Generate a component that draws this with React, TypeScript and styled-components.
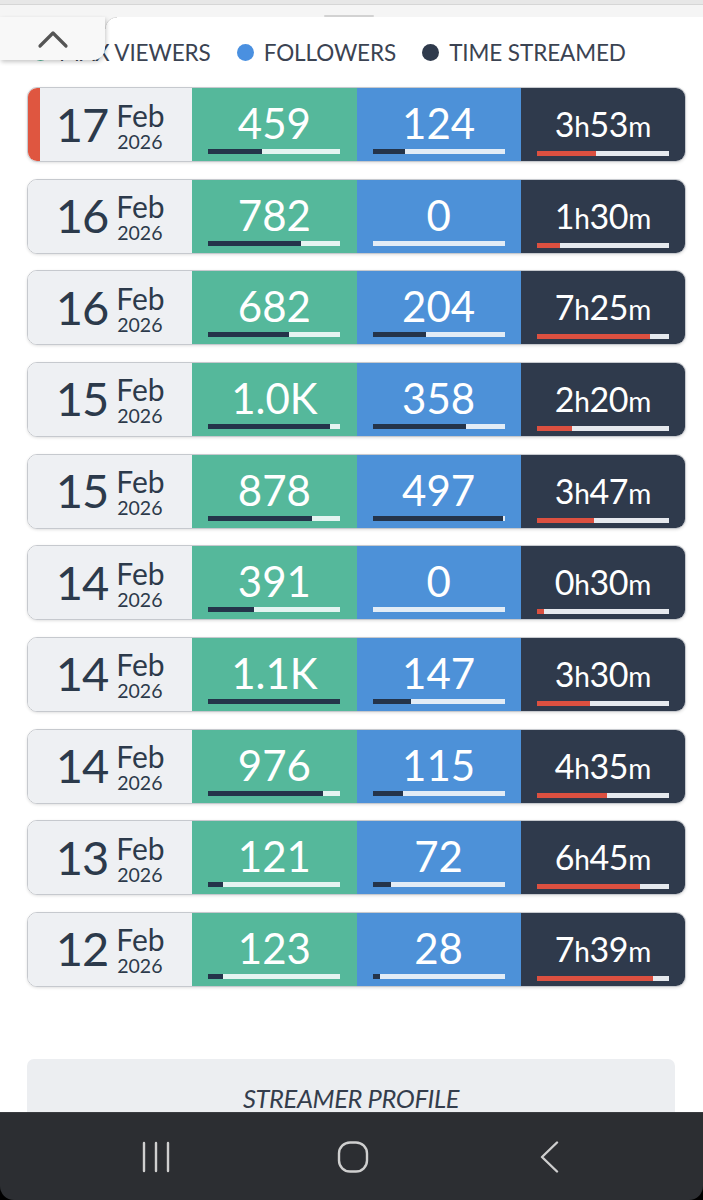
import React from "react";
import styled, { createGlobalStyle } from "styled-components";

const Global = createGlobalStyle`
  html, body { margin: 0; padding: 0; background: #ffffff; }
  body { font-family: Lato, "Open Sans", sans-serif; color: #2c3a4b; }
  * { box-sizing: border-box; }
`;

const Page = styled.div`
  position: relative;
  width: 703px;
  min-height: 1200px;
  background: #ffffff;
`;

const TopStrip = styled.div`
  height: 17px;
  background: #f5f5f5;
  border-top: 4px solid #e7e7e7;
  box-shadow: inset 0 1px 0 #d6d6d6;
  display: flex;
  justify-content: center;
  align-items: flex-end;
`;

const Handle = styled.div`
  width: 50px;
  height: 2px;
  margin-left: -5px;
  background: #d2d2d2;
  border-radius: 1px;
`;

const Tab = styled.div`
  position: absolute;
  left: 0;
  top: 17px;
  width: 105px;
  height: 43px;
  background: #f8f8f8;
  border-bottom-right-radius: 12px;
  box-shadow: 1px 2px 4px rgba(0, 0, 0, 0.22);
  display: flex;
  align-items: center;
  justify-content: center;
  z-index: 2;
`;

const Legend = styled.div`
  position: relative;
  height: 70px;
  display: flex;
  align-items: center;
  padding-left: 32px;
  gap: 26px;
  &::before {
    content: "";
    position: absolute;
    left: 105px;
    top: 0;
    width: 12px;
    height: 12px;
    background: radial-gradient(circle at 100% 100%, transparent 11px, #dcdcdc 11.5px, #f5f5f5 12.5px);
  }
`;

const LegendItem = styled.div`
  display: flex;
  align-items: center;
  gap: 10px;
  font-size: 22.5px;
  color: #3b4352;
  letter-spacing: -0.1px;
`;

const Dot = styled.span<{ $c: string }>`
  width: 17px;
  height: 17px;
  border-radius: 50%;
  background: ${(p) => p.$c};
  display: inline-block;
`;

const List = styled.div`
  display: flex;
  flex-direction: column;
  gap: 16.67px;
  padding: 0 17px 0 27px;
`;

const Row = styled.div`
  height: 75px;
  display: grid;
  grid-template-columns: repeat(4, 1fr);
  border: 1px solid #c6c9ce;
  border-radius: 10px;
  overflow: hidden;
  box-shadow: 0 1px 3px rgba(0, 0, 0, 0.12);
`;

const DateCell = styled.div<{ $hl?: boolean }>`
  background: #eef0f3;
  box-shadow: ${(p) => (p.$hl ? "inset 12px 0 0 #df5640" : "none")};
  display: flex;
  justify-content: center;
  align-items: flex-start;
  padding-top: 12.5px;
  gap: 8px;
  color: #2c3a4b;
`;

const Day = styled.span`
  font-size: 47px;
  line-height: 46px;
  letter-spacing: -1px;
`;

const MonthCol = styled.div`
  display: flex;
  flex-direction: column;
  align-items: flex-start;
`;

const Month = styled.span`
  font-size: 30px;
  line-height: 29px;
`;

const Year = styled.span`
  font-size: 19.5px;
  line-height: 20px;
  margin-top: 2px;
  margin-left: 1px;
`;

const ValueCell = styled.div<{ $bg: string; $pt: number }>`
  background: ${(p) => p.$bg};
  display: flex;
  flex-direction: column;
  align-items: center;
  padding: ${(p) => p.$pt}px 16px 0;
  color: #ffffff;
`;

const Value = styled.span`
  font-size: 42px;
  line-height: 42px;
`;

const Time = styled.span`
  font-size: 34px;
  line-height: 34px;
  letter-spacing: -0.3px;
`;

const Unit = styled.span`
  font-size: 28px;
`;

const Track = styled.div<{ $track: string; $mt: number }>`
  width: 132px;
  height: 5px;
  margin-top: ${(p) => p.$mt}px;
  background: ${(p) => p.$track};
  display: flex;
`;

const Fill = styled.div<{ $c: string }>`
  height: 100%;
  background: ${(p) => p.$c};
`;

const ProfileButton = styled.div`
  margin: 72px 0 0 27px;
  width: 648px;
  height: 90px;
  background: #eceef1;
  border-radius: 7px;
  padding-top: 26px;
  text-align: center;
  font-size: 25.5px;
  line-height: 26px;
  font-style: italic;
  color: #343d4c;
  letter-spacing: -0.4px;
`;

const NavWrap = styled.div`
  position: fixed;
  left: 0;
  right: 0;
  bottom: 0;
  height: 88px;
  background: #000;
`;

const Nav = styled.div`
  height: 100%;
  background: #2c2e32;
  border-top: 1px solid #3a3c40;
  border-radius: 0 0 14px 14px;
  display: flex;
  justify-content: center;
  align-items: center;
  gap: 165px;
  padding-left: 2px;
`;

const NavIcon = styled.svg`
  width: 32px;
  height: 32px;
  display: block;
`;

type R = {
  day: number;
  v: string;
  vn: number;
  f: number;
  h: number;
  m: number;
  hl?: boolean;
};

const rows: R[] = [
  { day: 17, v: "459", vn: 459, f: 124, h: 3, m: 53, hl: true },
  { day: 16, v: "782", vn: 782, f: 0, h: 1, m: 30 },
  { day: 16, v: "682", vn: 682, f: 204, h: 7, m: 25 },
  { day: 15, v: "1.0K", vn: 1030, f: 358, h: 2, m: 20 },
  { day: 15, v: "878", vn: 878, f: 497, h: 3, m: 47 },
  { day: 14, v: "391", vn: 391, f: 0, h: 0, m: 30 },
  { day: 14, v: "1.1K", vn: 1120, f: 147, h: 3, m: 30 },
  { day: 14, v: "976", vn: 976, f: 115, h: 4, m: 35 },
  { day: 13, v: "121", vn: 121, f: 72, h: 6, m: 45 },
  { day: 12, v: "123", vn: 123, f: 28, h: 7, m: 39 },
];

const pct = (n: number, max: number) => `${Math.min(100, (n / max) * 100)}%`;

const GREEN = "#55b89b";
const BLUE = "#4d91d8";
const DARK = "#2f3a4c";
const NAVY = "#24344a";

export default function App() {
  return (
    <Page>
      <Global />
      <TopStrip>
        <Handle />
      </TopStrip>
      <Tab>
        <svg width="32" height="20" viewBox="0 0 32 20">
          <polyline points="3,17 16,4 29,17" fill="none" stroke="#555" strokeWidth="3.2" strokeLinecap="round" strokeLinejoin="round" />
        </svg>
      </Tab>
      <Legend>
        <LegendItem>
          <Dot $c={GREEN} />
          MAX VIEWERS
        </LegendItem>
        <LegendItem>
          <Dot $c="#4a90e0" />
          FOLLOWERS
        </LegendItem>
        <LegendItem>
          <Dot $c={DARK} />
          TIME STREAMED
        </LegendItem>
      </Legend>
      <List>
        {rows.map((r, i) => (
          <Row key={i}>
            <DateCell $hl={r.hl}>
              <Day>{r.day}</Day>
              <MonthCol>
                <Month>Feb</Month>
                <Year>2026</Year>
              </MonthCol>
            </DateCell>
            <ValueCell $bg={GREEN} $pt={14}>
              <Value>{r.v}</Value>
              <Track $track="#e4f4f1" $mt={5}>
                <Fill $c={NAVY} style={{ width: pct(r.vn, 1120) }} />
              </Track>
            </ValueCell>
            <ValueCell $bg={BLUE} $pt={14}>
              <Value>{r.f}</Value>
              <Track $track="#e2ecf6" $mt={5}>
                <Fill $c={NAVY} style={{ width: pct(r.f, 505) }} />
              </Track>
            </ValueCell>
            <ValueCell $bg={DARK} $pt={19}>
              <Time>
                {r.h}
                <Unit>h</Unit>
                {String(r.m).padStart(2, "0")}
                <Unit>m</Unit>
              </Time>
              <Track $track="#e6e9ee" $mt={8}>
                <Fill $c="#dc5040" style={{ width: pct(r.h * 60 + r.m, 520) }} />
              </Track>
            </ValueCell>
          </Row>
        ))}
      </List>
      <ProfileButton>STREAMER PROFILE</ProfileButton>
      <NavWrap>
        <Nav>
          <NavIcon viewBox="0 0 32 32">
            <g stroke="#cfcfcf" strokeWidth="2.4" strokeLinecap="round">
              <line x1="4" y1="2" x2="4" y2="30" />
              <line x1="16" y1="2" x2="16" y2="30" />
              <line x1="28" y1="2" x2="28" y2="30" />
            </g>
          </NavIcon>
          <NavIcon viewBox="0 0 32 32">
            <rect x="2" y="1.5" width="28" height="29" rx="11" fill="none" stroke="#cfcfcf" strokeWidth="2.4" />
          </NavIcon>
          <NavIcon viewBox="0 0 32 32">
            <polyline points="23,1.5 8,16 23,30.5" fill="none" stroke="#cfcfcf" strokeWidth="2.4" strokeLinecap="round" strokeLinejoin="round" />
          </NavIcon>
        </Nav>
      </NavWrap>
    </Page>
  );
}
